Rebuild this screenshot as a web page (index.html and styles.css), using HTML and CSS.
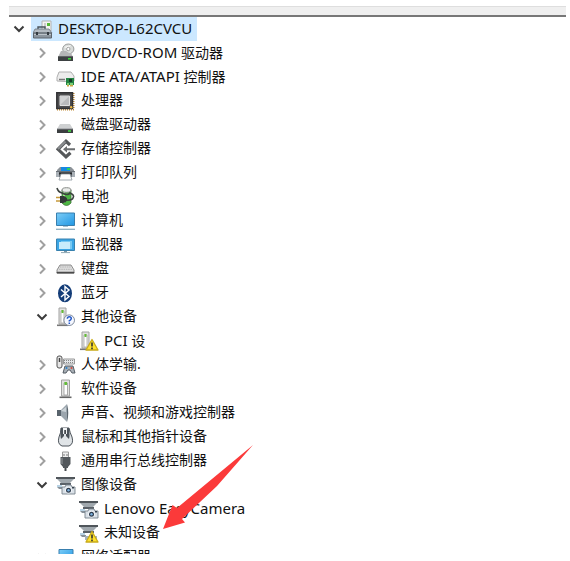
FILE: index.html
```html
<!DOCTYPE html>
<html lang="zh-CN">
<head>
    <meta charset="UTF-8">
    <meta name="viewport" content="width=device-width, initial-scale=1.0">
    <title>设备管理器</title>
    <link rel="stylesheet" href="styles.css">
</head>
<body>
    <!-- Shared icon shapes -->
    <svg class="defs" aria-hidden="true">
        <defs>
            <linearGradient id="screen" x1="0" y1="0" x2="1" y2="1">
                <stop offset="0" stop-color="#7ccdf7"/><stop offset="1" stop-color="#2196e3"/>
            </linearGradient>
        </defs>
        <symbol id="right" viewBox="0 0 16 16"><path d="M6 3.5l4.5 4.5L6 12.5" fill="none" stroke="#a0a0a0" stroke-width="2"/></symbol>
        <symbol id="down" viewBox="0 0 16 16"><path d="M3.5 5.5l4.500 4.500 4.500-4.500" fill="none" stroke="#3c3c3c" stroke-width="2"/></symbol>
        <symbol id="tower" viewBox="0 0 20 20">
            <path d="M3 1h7v16H3z" fill="#e2e2e0" stroke="#a2a2a2"/>
            <path d="M5 4h3v12H5z" fill="#fff" stroke="#aaa" stroke-width=".8"/>
            <path d="M6.5 3v3" stroke="#62bd35" stroke-width="2"/>
            <path d="M1 18.3h11" stroke="#777" stroke-width="1.6"/>
        </symbol>
        <symbol id="warning" viewBox="0 0 20 20">
            <path d="M13 8.5L19 19H7z" fill="#ffe22e" stroke="#c9ab1a" stroke-width="1.300" stroke-linejoin="round"/>
            <path d="M13 11.5v4M13 16.6v1.6" stroke="#333" stroke-width="1.6"/>
        </symbol>
        <symbol id="scanner" viewBox="0 0 20 20">
            <path d="M0 2h19v2H0z" fill="#50565b"/>
            <path d="M1 4h17l-4 4H5z" fill="#a0a8ae"/>
            <path d="M4 8h11v2H4z" fill="#5a6168"/>
            <path d="M1 10h5v2H1z" fill="#b8d2e4"/>
            <path d="M1 12h6v2H3z" fill="#87919a"/>
        </symbol>
        <symbol id="camera" viewBox="0 0 20 20">
            <use href="#scanner"/>
            <path d="M6 12h3l1-2h5l1 2h3v7H6z" fill="#d9e0e7" stroke="#77818b" stroke-width=".9"/>
            <circle cx="12.5" cy="15.3" r="3.3" fill="#f4f7fa"/>
            <circle cx="12.5" cy="15.3" r="2.5" fill="#2c3a4b"/>
            <circle cx="12.5" cy="15.3" r="1.2" fill="#7db2df"/>
            <path d="M16 12h2v1.5h-2z" fill="#37424e"/>
        </symbol>
    </svg>

    <main class="window">
        <div class="toolbar"></div>

        <ul class="tree">
            <li>
                <div class="row">
                    <button class="toggle" aria-label="折叠"><svg><use href="#down"/></svg></button>
                    <a class="node selected" href="#">
                        <svg class="icon" viewBox="0 0 20 20">
                            <path d="M9 2h9v10H9z" fill="#f4f4f2" stroke="#b2b2b2"/>
                            <path d="M11 4h2v5h-2z" fill="#ccc"/><path d="M14 5.5h3" stroke="#55b936" stroke-width="3"/>
                            <path d="M5 11V8h7v3" fill="none" stroke="#4a535b" stroke-width="1.4"/>
                            <path d="M2 10h14l3 4H0z" fill="#b3bbc2" stroke="#6b747c" stroke-width=".8"/>
                            <path d="M.5 14h18v5H.5z" fill="#8c969f" stroke="#5d656c"/>
                            <path d="M1 15.5h17" stroke="#bcc4ca"/><path d="M3 13h2v3H3zM14 13h2v3h-2z" fill="#343b41"/>
                        </svg>
                        <span class="label latin">DESKTOP-L62CVCU</span>
                    </a>
                </div>

                <ul class="branch">
                    <li class="row">
                        <button class="toggle" aria-label="展开"><svg><use href="#right"/></svg></button>
                        <a class="node" href="#">
                            <svg class="icon" viewBox="0 0 20 20">
                                <ellipse cx="12.3" cy="6" rx="5.6" ry="5" fill="#d9dcda" stroke="#9b9d9c"/>
                                <path d="M8 4l4 2 3-4" fill="#f7f7f5"/><circle cx="12.3" cy="6" r="1.7" fill="#fff" stroke="#a3a3a3"/>
                                <path d="M5 8h5l3 2h2l2 4H2z" fill="#b4b5b6"/>
                                <path d="M2 13.3h15V18H2z" fill="#3d4142"/><path d="M12 15.8h3" stroke="#38d638" stroke-width="1.6"/>
                            </svg>
                            <span class="label"><span class="latin">DVD/CD-ROM</span> 驱动器</span>
                        </a>
                    </li>
                    <li class="row">
                        <button class="toggle" aria-label="展开"><svg><use href="#right"/></svg></button>
                        <a class="node" href="#">
                            <svg class="icon" viewBox="0 0 20 20">
                                <path d="M3 5h12l3 4v5q-8 1-17 0Q0 11 3 5z" fill="#ececec" stroke="#b0b0b0"/>
                                <path d="M3 12.500h6" stroke="#777" stroke-width="1.5"/>
                                <path d="M10 11h8v7h-8z" fill="#238443"/><path d="M13 12h3v3h-3z" fill="#143e26"/>
                                <path d="M11 17h2M14 17h3" stroke="#a0e78c" stroke-width="1.5"/><path d="M11 18h2v1.5h-2zM14 18h3v1.5h-3z" fill="#c8a642"/>
                            </svg>
                            <span class="label"><span class="latin">IDE ATA/ATAPI</span> 控制器</span>
                        </a>
                    </li>
                    <li class="row">
                        <button class="toggle" aria-label="展开"><svg><use href="#right"/></svg></button>
                        <a class="node" href="#">
                            <svg class="icon" viewBox="0 0 20 20">
                                <path d="M17.7 2v16M1 18.7h17" fill="none" stroke="#c18a33" stroke-width="1.6" stroke-dasharray="1 1"/>
                                <path d="M.8 1.8h15.7v15.7H.8z" fill="#4e4e50" stroke="#323234" stroke-width="1.5"/>
                                <path d="M4 5h9.5v9.5H4z" fill="#b9babc" stroke="#e0e0e0"/><path d="M4.5 5.5h8.5l-8.5 8z" fill="#d1d2d3"/>
                                <circle cx="15.2" cy="16.2" r="1.2" fill="#eeb943"/>
                            </svg>
                            <span class="label">处理器</span>
                        </a>
                    </li>
                    <li class="row">
                        <button class="toggle" aria-label="展开"><svg><use href="#right"/></svg></button>
                        <a class="node" href="#">
                            <svg class="icon" viewBox="0 0 20 20">
                                <path d="M4 9h10l3 5H1z" fill="#cfd1d2"/><path d="M1 14h16v4H1z" fill="#3b3e40"/>
                                <path d="M1 13.8h16" stroke="#a0a3a5"/><path d="M12 16h3" stroke="#41dc42" stroke-width="1.6"/>
                            </svg>
                            <span class="label">磁盘驱动器</span>
                        </a>
                    </li>
                    <li class="row">
                        <button class="toggle" aria-label="展开"><svg><use href="#right"/></svg></button>
                        <a class="node" href="#">
                            <svg class="icon" viewBox="0 0 20 20">
                                <path d="M14 6L10 2.300 2 10.300l8 7.500 4.500-4" fill="none" stroke="#55585a" stroke-width="3.200"/>
                                <path d="M9.500 2.500L2 10" stroke="#8a8d8f" stroke-width="2"/>
                                <path d="M7 10.300l4-3.300v2.300h8v2h-8v2.300z" fill="#6b6e70"/>
                            </svg>
                            <span class="label">存储控制器</span>
                        </a>
                    </li>
                    <li class="row">
                        <button class="toggle" aria-label="展开"><svg><use href="#right"/></svg></button>
                        <a class="node" href="#">
                            <svg class="icon" viewBox="0 0 20 20">
                                <path d="M4 4h11l3 3v5H1V7z" fill="#8b9298"/><path d="M5 4h9v4H5z" fill="#168ae1"/>
                                <path d="M11 5h3v2h-3z" fill="#2fd158"/><path d="M0 8h19v6H0z" fill="#6a7076"/>
                                <path d="M0 9h3v5H0zM16 9h3v5h-3z" fill="#a9b0b6"/><path d="M3 9.500h13v2H3z" fill="#262a2e"/>
                                <path d="M5 11h9l2 6H3z" fill="#fff" stroke="#8e989f" stroke-width=".8"/>
                            </svg>
                            <span class="label">打印队列</span>
                        </a>
                    </li>
                    <li class="row">
                        <button class="toggle" aria-label="展开"><svg><use href="#right"/></svg></button>
                        <a class="node" href="#">
                            <svg class="icon" viewBox="0 0 20 20">
                                <path d="M6 3v13q4.500 5 9 0V3z" fill="#4db743" stroke="#40733b" stroke-width=".8"/>
                                <path d="M8 4v12" stroke="#a6ec91" stroke-width="2"/><ellipse cx="10.500" cy="3" rx="4.500" ry="2.300" fill="#eaecea" stroke="#858985"/>
                                <path d="M1 1q1 4 5 5 6 3 8 0 5 2 3 5-1 3-8 2" fill="none" stroke="#3d4340" stroke-width="1.600"/>
                                <path d="M4 9h4q4 2 3 4-1 3-4 3H4z" fill="#333937"/>
                                <path d="M0 10.500h4M0 14h4" stroke="#c5993b" stroke-width="1.600"/>
                            </svg>
                            <span class="label">电池</span>
                        </a>
                    </li>
                    <li class="row">
                        <button class="toggle" aria-label="展开"><svg><use href="#right"/></svg></button>
                        <a class="node" href="#">
                            <svg class="icon" viewBox="0 0 20 20">
                                <path d="M.5 2h18v12.500H.5z" fill="url(#screen)" stroke="#397fae"/>
                                <path d="M7 15h5v1H7z" fill="#aac2d2"/><path d="M0 18.300h19" stroke="#8faebf" stroke-width="1.300"/>
                            </svg>
                            <span class="label">计算机</span>
                        </a>
                    </li>
                    <li class="row">
                        <button class="toggle" aria-label="展开"><svg><use href="#right"/></svg></button>
                        <a class="node" href="#">
                            <svg class="icon" viewBox="0 0 20 20">
                                <path d="M.5 4h18v11.500H.5z" fill="#3aa5e5" stroke="#3881ae"/>
                                <path d="M3 7h11v7H3z" fill="#c8ecfc"/><path d="M14 6h2v8h-2zM5 6h9v1H5z" fill="#78c9f2"/>
                                <path d="M8 16h3v1.200H8z" fill="#7998a8"/><path d="M5 17.600h9" stroke="#8fa7b3"/>
                            </svg>
                            <span class="label">监视器</span>
                        </a>
                    </li>
                    <li class="row">
                        <button class="toggle" aria-label="展开"><svg><use href="#right"/></svg></button>
                        <a class="node" href="#">
                            <svg class="icon" viewBox="0 0 20 20">
                                <path d="M4 6h11l3 5v3H1v-3z" fill="#dedede" stroke="#8b8b8b" stroke-linejoin="round"/>
                                <path d="M4 8h11M3 10.300h13" stroke="#b4b4b4" stroke-dasharray="1.500 .8"/>
                                <path d="M1.500 13.700h16" stroke="#4b4b4b" stroke-width="1.700" stroke-linecap="round"/>
                            </svg>
                            <span class="label">键盘</span>
                        </a>
                    </li>
                    <li class="row">
                        <button class="toggle" aria-label="展开"><svg><use href="#right"/></svg></button>
                        <a class="node" href="#">
                            <svg class="icon" viewBox="0 0 20 20">
                                <ellipse cx="9" cy="10.300" rx="7" ry="9" fill="#143d78"/>
                                <path d="M5 6.500l8 7-4 3.500V3.500L13 7l-8 7" fill="none" stroke="#fff" stroke-width="1.400"/>
                            </svg>
                            <span class="label">蓝牙</span>
                        </a>
                    </li>
                    <li>
                        <div class="row">
                            <button class="toggle" aria-label="折叠"><svg><use href="#down"/></svg></button>
                            <a class="node" href="#">
                                <svg class="icon" viewBox="0 0 20 20">
                                    <use href="#tower"/>
                                    <circle cx="13.200" cy="13.200" r="5.300" fill="#f6f8ff" stroke="#7e8a9c"/>
                                    <path d="M11.300 11.700q.2-2 2-2 2 0 2 1.800 0 1.200-2 2.300v.7M13.300 15.500V17" fill="none" stroke="#2459c8" stroke-width="1.500"/>
                                </svg>
                                <span class="label">其他设备</span>
                            </a>
                        </div>
                        <ul class="branch">
                            <li class="row leaf">
                                <a class="node" href="#">
                                    <svg class="icon" viewBox="0 0 20 20"><use href="#tower"/><use href="#warning"/></svg>
                                    <span class="label"><span class="latin">PCI</span> 设</span>
                                </a>
                            </li>
                        </ul>
                    </li>
                    <li class="row">
                        <button class="toggle" aria-label="展开"><svg><use href="#right"/></svg></button>
                        <a class="node" href="#">
                            <svg class="icon" viewBox="0 0 20 20">
                                <rect x="1" y="1" width="5" height="12" rx="2" fill="#e6e6e6" stroke="#525252"/><path d="M3.500 3v4" stroke="#444" stroke-width="1.500"/>
                                <path d="M7.500 4h11v5h-11z" fill="#e4e6e8" stroke="#999"/><path d="M8 5.500h10M8 7.500h10" stroke="#888" stroke-dasharray="1 1"/>
                                <path d="M9 11h8l2 7h-3l-2-3h-2l-2 3H7z" fill="#a8afb6" stroke="#555d65"/>
                                <circle cx="10.500" cy="13" r="1" fill="#2983cb"/><circle cx="15.500" cy="13" r="1" fill="#d6483b"/>
                            </svg>
                            <span class="label">人体学输.</span>
                        </a>
                    </li>
                    <li class="row">
                        <button class="toggle" aria-label="展开"><svg><use href="#right"/></svg></button>
                        <a class="node" href="#">
                            <svg class="icon" viewBox="0 0 20 20">
                                <path d="M5.500 1h8v16h-8z" fill="#e2e2e0" stroke="#a2a2a2"/>
                                <path d="M8 4h3.500v12H8z" fill="#fff" stroke="#999" stroke-width=".8"/>
                                <path d="M9.700 3v3" stroke="#62bd35" stroke-width="2.500"/><path d="M3.500 18.300h12" stroke="#666" stroke-width="1.600"/>
                            </svg>
                            <span class="label">软件设备</span>
                        </a>
                    </li>
                    <li class="row">
                        <button class="toggle" aria-label="展开"><svg><use href="#right"/></svg></button>
                        <a class="node" href="#">
                            <svg class="icon" viewBox="0 0 20 20">
                                <path d="M1 7h4v6H1z" fill="#58636c"/><path d="M5 7l6-6v18l-6-6z" fill="#9ba5ad"/>
                                <path d="M11 1q2.500 9 0 18z" fill="#5a656d"/><path d="M5 8l5-4v5z" fill="#cbd3d8"/>
                            </svg>
                            <span class="label">声音、视频和游戏控制器</span>
                        </a>
                    </li>
                    <li class="row">
                        <button class="toggle" aria-label="展开"><svg><use href="#right"/></svg></button>
                        <a class="node" href="#">
                            <svg class="icon" viewBox="0 0 20 20">
                                <path d="M5 1h8q1 5 3 9 2 7-3 9H6q-5-2-3-9 2-4 2-9z" fill="#e0e4e7" stroke="#4c535a"/>
                                <path d="M5 1q-1 8 0 11l3-3V1zM13 1q1 8 0 11l-3-3V1z" fill="#4b5259"/>
                                <path d="M7 1h4v6H7z" fill="#f2f4f6"/><path d="M8.300 3h1.600v4H8.300z" fill="#30363b"/>
                            </svg>
                            <span class="label">鼠标和其他指针设备</span>
                        </a>
                    </li>
                    <li class="row">
                        <button class="toggle" aria-label="展开"><svg><use href="#right"/></svg></button>
                        <a class="node" href="#">
                            <svg class="icon" viewBox="0 0 20 20">
                                <path d="M6.500 1h6v6h-6z" fill="#eee" stroke="#999"/><path d="M8 3v2M11 3v2" stroke="#777"/>
                                <path d="M4.500 6h10v7l-2.500 3v1H7v-1l-2.500-3z" fill="#53585c"/><path d="M6 7v6" stroke="#878c90" stroke-width="1.300"/>
                                <path d="M9.500 17v3" stroke="#45494c" stroke-width="2"/>
                            </svg>
                            <span class="label">通用串行总线控制器</span>
                        </a>
                    </li>
                    <li>
                        <div class="row">
                            <button class="toggle" aria-label="折叠"><svg><use href="#down"/></svg></button>
                            <a class="node" href="#">
                                <svg class="icon" viewBox="0 0 20 20"><use href="#camera"/></svg>
                                <span class="label">图像设备</span>
                            </a>
                        </div>
                        <ul class="branch">
                            <li class="row leaf">
                                <a class="node" href="#">
                                    <svg class="icon" viewBox="0 0 20 20"><use href="#camera"/></svg>
                                    <span class="label latin">Lenovo EasyCamera</span>
                                </a>
                            </li>
                            <li class="row leaf">
                                <a class="node" href="#">
                                    <svg class="icon" viewBox="0 0 20 20"><use href="#scanner"/><path d="M6 13h12v4H6z" fill="#a7b1ba"/><use href="#warning"/></svg>
                                    <span class="label">未知设备</span>
                                </a>
                            </li>
                        </ul>
                    </li>
                    <li class="row">
                        <button class="toggle" aria-label="折叠"><svg><use href="#down"/></svg></button>
                        <a class="node" href="#">
                            <svg class="icon" viewBox="0 0 20 20">
                                <path d="M3 2.500h14v11H3z" fill="url(#screen)" stroke="#397fae"/><path d="M0 8h4v6H0z" fill="#6fc3ee"/>
                            </svg>
                            <span class="label">网络适配器</span>
                        </a>
                    </li>
                </ul>
            </li>
        </ul>

        <!-- Pointer to the unknown device -->
        <svg class="arrow" viewBox="0 0 92 86" aria-hidden="true">
            <path d="M1 85L10.500 61l4.500 3L91 1 55 42 20 75l3 3.500z" fill="#fb3a3a"/>
        </svg>
    </main>
</body>
</html>
```
FILE: styles.css
```css
* {
    box-sizing: border-box;
}

body {
    margin: 0;
    background-color: #fff;
    color: #111;
    font-family: "Noto Sans", "Noto Sans CJK SC", sans-serif;
    font-size: 14px;
    line-height: 22px;
}

ul {
    margin: 0;
    padding: 0;
    list-style: none;
}

.defs {
    position: absolute;
    width: 0;
    height: 0;
}

.window {
    position: relative;
    height: calc(100vh - 13px);
    margin: 6px 4px 7px 9px;
    overflow: hidden;
}

.toolbar {
    height: 11px;
    background-color: #efefef;
    border-top: 1px solid #dedede;
    border-bottom: 2px solid #777;
}

/* Device tree */
.tree {
    padding-left: 2px;
}

.branch {
    padding-left: 23px;
}

.row {
    display: flex;
    align-items: center;
    gap: 4px;
    height: 24px;
}

.leaf {
    padding-left: 20px;
}

.toggle {
    flex: none;
    width: 16px;
    height: 16px;
    padding: 0;
    border: none;
    background: none;
    cursor: pointer;
}

.toggle svg {
    display: block;
    width: 16px;
    height: 16px;
}

.node {
    display: flex;
    align-items: center;
    gap: 5px;
    padding: 0 5px 0 2px;
    color: inherit;
    text-decoration: none;
    white-space: nowrap;
}

.label {
    padding-bottom: 2px;
}

.selected {
    background-color: #cce8ff;
}

.icon {
    flex: none;
    width: 20px;
    height: 20px;
}

.latin {
    font-size: 15px;
}

/* Red arrow drawn over the tree */
.arrow {
    position: absolute;
    left: 153px;
    top: 438px;
    width: 92px;
    height: 86px;
    pointer-events: none;
}
```
